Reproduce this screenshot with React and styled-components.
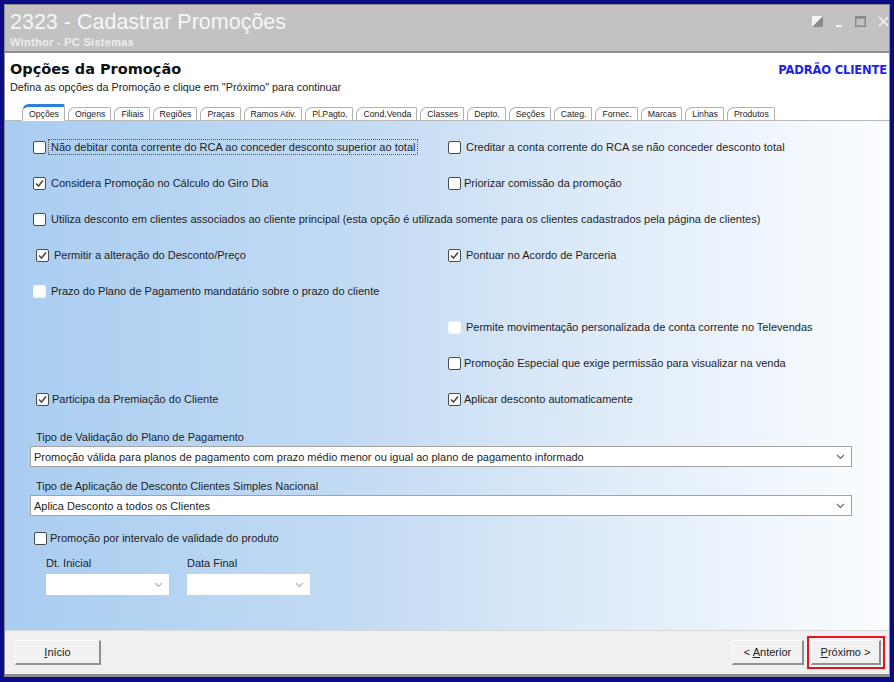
import React from "react";
import styled, { createGlobalStyle } from "styled-components";

const GlobalStyle = createGlobalStyle`
  html, body {
    margin: 0;
    padding: 0;
    background: #0b0b86;
  }
  * { box-sizing: border-box; }
`;

const tabs = [
  "Opções", "Origens", "Filiais", "Regiões", "Praças", "Ramos Ativ.", "Pl.Pagto.",
  "Cond.Venda", "Classes", "Depto.", "Seções", "Categ.", "Fornec.", "Marcas", "Linhas", "Produtos",
];

// each row: [left option, right option]; a null side stays empty
const optionRows = [
  [
    { label: "Não debitar conta corrente do RCA ao conceder desconto superior ao total", focused: true },
    { label: "Creditar a conta corrente do RCA se não conceder desconto total" },
  ],
  [
    { label: "Considera Promoção no Cálculo do Giro Dia", checked: true },
    { label: "Priorizar comissão da promoção", tight: true },
  ],
  [
    { label: "Utiliza desconto em clientes associados ao cliente principal (esta opção é utilizada somente para os clientes cadastrados pela  página de clientes)", wide: true },
  ],
  [
    { label: "Permitir a alteração do Desconto/Preço", checked: true, shift: 3 },
    { label: "Pontuar no Acordo de Parceria", checked: true },
  ],
  [
    { label: "Prazo do Plano de Pagamento mandatário sobre o prazo do cliente", disabled: true },
    null,
  ],
  [
    null,
    { label: "Permite movimentação personalizada de conta corrente no Televendas", disabled: true },
  ],
  [
    null,
    { label: "Promoção Especial que exige permissão para visualizar na venda", tight: true },
  ],
  [
    { label: "Participa da Premiação do Cliente", checked: true, shift: 3, tight: true },
    { label: "Aplicar desconto automaticamente", checked: true, tight: true },
  ],
];

const Frame = styled.div`
  width: 894px;
  height: 682px;
  padding: 4px 4px 5px 4px;
  background: #0b0b86;
`;

const Window = styled.div`
  height: 100%;
  display: flex;
  flex-direction: column;
  background: #ffffff;
  border: 1px solid #8c8c8c;
  border-bottom-width: 3px;
  font-family: "Liberation Sans", Arial, sans-serif;
`;

const TitleBar = styled.div`
  height: 48px;
  flex: none;
  display: flex;
  justify-content: space-between;
  background: #c2c2c2;
  border-bottom: 2px solid #8e8e8e;
  padding: 4px 0 0 5px;
`;

const TitleText = styled.div`
  display: flex;
  flex-direction: column;
`;

const AppTitle = styled.div`
  font-size: 21.5px;
  line-height: 26px;
  color: #f6f6f6;
`;

const AppSub = styled.div`
  font-size: 11px;
  font-weight: bold;
  letter-spacing: 0.3px;
  color: #ececec;
  margin-top: 1px;
`;

const Controls = styled.div`
  display: flex;
  align-items: flex-start;
  gap: 12px;
  padding-top: 7px;
`;

const Header = styled.div`
  height: 51px;
  flex: none;
  display: flex;
  justify-content: space-between;
  padding: 6px 2px 0 5px;
`;

const PageTitle = styled.div`
  font-family: "DejaVu Sans", Verdana, sans-serif;
  font-weight: bold;
  font-size: 14.5px;
  color: #111;
  line-height: 20px;
`;

const PageHint = styled.div`
  font-size: 10.8px;
  color: #222;
  margin-top: 2px;
`;

const Badge = styled.div`
  font-family: "DejaVu Sans", Verdana, sans-serif;
  font-weight: bold;
  font-size: 11.6px;
  color: #1f1ff0;
  padding-top: 4px;
  letter-spacing: -0.2px;
`;

const TabStrip = styled.div`
  height: 17px;
  flex: none;
  display: flex;
  align-items: flex-end;
  gap: 3px;
  padding-left: 17px;
  border-bottom: 1px solid #b9b9b9;
`;

const Tab = styled.div`
  height: ${(p) => (p.$active ? 17 : 14)}px;
  padding: 0 5px 0 6px;
  margin-bottom: -1px;
  display: flex;
  align-items: center;
  font-size: 8.7px;
  color: #222;
  background: #ffffff;
  border: 1px solid #b0b0b0;
  border-bottom: ${(p) => (p.$active ? "1px solid #fff" : "1px solid #b9b9b9")};
  border-top: ${(p) => (p.$active ? "3px solid #2c7fd8" : "1px solid #b0b0b0")};
  border-radius: 7px 2px 0 0;
`;

const Panel = styled.div`
  flex: 1;
  padding: 8px 0 0 28px;
  background: linear-gradient(to right, #a9cdf1 0%, #c3dbf3 40%, #e3eefa 72%, #fbfdff 100%);
`;

const OptionGrid = styled.div`
  display: grid;
  grid-template-columns: 415px 1fr;
  grid-auto-rows: 36px;
`;

const Cell = styled.div`
  display: flex;
  align-items: center;
  grid-column: ${(p) => (p.$wide ? "1 / -1" : "auto")};
  padding-left: ${(p) => p.$shift || 0}px;
`;

const IntervalRow = styled(Cell)`
  height: 44px;
  margin-bottom: -3px;
`;

const Box = styled.span`
  width: 13px;
  height: 13px;
  flex: none;
  display: flex;
  align-items: center;
  justify-content: center;
  background: #fff;
  border: 1px solid ${(p) => (p.$disabled ? "#f4f4f4" : "#4a4a4a")};
  border-radius: 2px;
`;

const OptionLabel = styled.span`
  margin-left: ${(p) => (p.$tight ? 0 : 2)}px;
  padding: 1px 2px;
  font-size: 11px;
  color: #1e1e1e;
  white-space: nowrap;
  border: 1px dotted ${(p) => (p.$focused ? "#555" : "transparent")};
`;

const FieldLabel = styled.div`
  font-size: 11px;
  color: #1e1e1e;
  margin: ${(p) => p.$top}px 0 3px 3px;
`;

const Select = styled.div`
  width: 822px;
  height: 21px;
  margin-left: -3px;
  display: flex;
  align-items: center;
  justify-content: space-between;
  padding: 0 6px 0 3px;
  background: #fff;
  border: 1px solid #a3a3a3;
  font-size: 11px;
  color: #1e1e1e;
`;

const DateRow = styled.div`
  display: flex;
  gap: 18px;
  margin-left: 13px;
`;

const DateField = styled.div`
  display: flex;
  flex-direction: column;
`;

const DateLabel = styled.div`
  font-size: 11px;
  color: #1e1e1e;
  margin-bottom: 5px;
`;

const DateInput = styled.div`
  width: 123px;
  height: 21px;
  display: flex;
  align-items: center;
  justify-content: flex-end;
  padding-right: 6px;
  background: #fff;
`;

const Footer = styled.div`
  height: 44px;
  flex: none;
  display: flex;
  align-items: center;
  justify-content: space-between;
  padding: 0 4px 0 10px;
  background: #f0f0f0;
  border-top: 1px solid #d8d8d8;
`;

const NavGroup = styled.div`
  display: flex;
  align-items: center;
  gap: 3px;
`;

const Button = styled.div`
  width: ${(p) => p.$w}px;
  height: 25px;
  display: flex;
  align-items: center;
  justify-content: center;
  font-size: 11px;
  color: #222;
  background: #f1f1f1;
  border-top: 1px solid #fafafa;
  border-left: 1px solid #fafafa;
  border-right: 2px solid #8f8f8f;
  border-bottom: 2px solid #8f8f8f;
  u { text-decoration: underline; }
`;

const Highlight = styled.div`
  padding: 2px;
  border: 2px solid #e5151d;
`;

const Check = () => (
  <svg width="11" height="11" viewBox="0 0 11 11">
    <polyline points="2,5.5 4.5,8 9,2.5" fill="none" stroke="#4b4b4b" strokeWidth="1.6" />
  </svg>
);

const Chevron = ({ color = "#666" }) => (
  <svg width="9" height="6" viewBox="0 0 9 6">
    <polyline points="1,1 4.5,4.5 8,1" fill="none" stroke={color} strokeWidth="1.1" />
  </svg>
);

const WindowControls = () => (
  <Controls>
    <svg width="11" height="11" viewBox="0 0 11 11">
      <rect x="0" y="0" width="11" height="11" fill="#f4f4f4" />
      <polygon points="11,0 11,11 0,11" fill="#8a8a8a" />
    </svg>
    <svg width="8" height="11" viewBox="0 0 8 11">
      <rect x="1" y="9" width="6" height="2" fill="#f2f2f2" />
    </svg>
    <svg width="11" height="11" viewBox="0 0 11 11">
      <rect x="0.75" y="0.75" width="9.5" height="9.5" fill="none" stroke="#8a8a8a" strokeWidth="1.5" />
      <rect x="0.75" y="0.75" width="9.5" height="2" fill="#8a8a8a" />
    </svg>
    <svg width="11" height="11" viewBox="0 0 11 11">
      <path d="M1 1 L10 10 M10 1 L1 10" stroke="#f4f4f4" strokeWidth="1.7" />
    </svg>
  </Controls>
);

const Option = ({ opt }) => (
  <Cell $wide={opt.wide} $shift={opt.shift}>
    <Box $disabled={opt.disabled}>{opt.checked && <Check />}</Box>
    <OptionLabel $tight={opt.tight} $focused={opt.focused}>{opt.label}</OptionLabel>
  </Cell>
);

export default function App() {
  return (
    <>
      <GlobalStyle />
      <Frame>
        <Window>
          <TitleBar>
            <TitleText>
              <AppTitle>2323 - Cadastrar Promoções</AppTitle>
              <AppSub>Winthor - PC Sistemas</AppSub>
            </TitleText>
            <WindowControls />
          </TitleBar>

          <Header>
            <div>
              <PageTitle>Opções da Promoção</PageTitle>
              <PageHint>Defina as opções da Promoção e clique em "Próximo" para continuar</PageHint>
            </div>
            <Badge>PADRÃO CLIENTE</Badge>
          </Header>

          <TabStrip>
            {tabs.map((t, i) => (
              <Tab key={t} $active={i === 0}>{t}</Tab>
            ))}
          </TabStrip>

          <Panel>
            <OptionGrid>
              {optionRows.map((row, r) =>
                row.map((opt, c) =>
                  opt ? <Option key={`${r}-${c}`} opt={opt} /> : <Cell key={`${r}-${c}`} />
                )
              )}
            </OptionGrid>

            <FieldLabel $top={14}>Tipo de Validação do Plano de Pagamento</FieldLabel>
            <Select>
              <span>Promoção válida para planos de pagamento com prazo médio menor ou igual ao plano de pagamento informado</span>
              <Chevron />
            </Select>

            <FieldLabel $top={13}>Tipo de Aplicação de Desconto Clientes Simples Nacional</FieldLabel>
            <Select>
              <span>Aplica Desconto a todos os Clientes</span>
              <Chevron />
            </Select>

            <IntervalRow $shift={1}>
              <Box />
              <OptionLabel $tight>Promoção por intervalo de validade do produto</OptionLabel>
            </IntervalRow>

            <DateRow>
              <DateField>
                <DateLabel>Dt. Inicial</DateLabel>
                <DateInput><Chevron color="#b5b5b5" /></DateInput>
              </DateField>
              <DateField>
                <DateLabel>Data Final</DateLabel>
                <DateInput><Chevron color="#b5b5b5" /></DateInput>
              </DateField>
            </DateRow>
          </Panel>

          <Footer>
            <Button $w={86}><span><u>I</u>nício</span></Button>
            <NavGroup>
              <Button $w={72}><span>&lt; <u>A</u>nterior</span></Button>
              <Highlight>
                <Button $w={70}><span><u>P</u>róximo &gt;</span></Button>
              </Highlight>
            </NavGroup>
          </Footer>
        </Window>
      </Frame>
    </>
  );
}
